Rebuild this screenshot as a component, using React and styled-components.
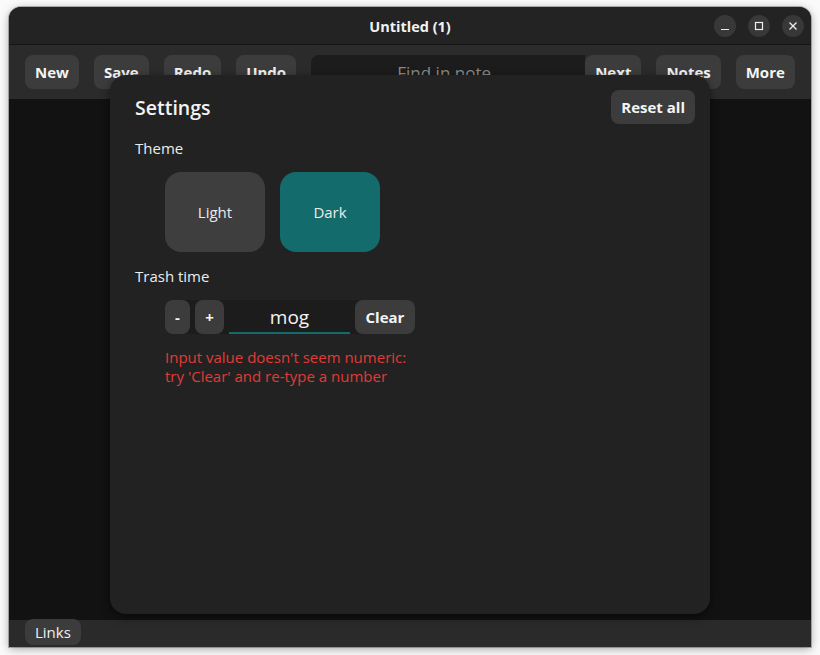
import React from "react";
import styled, { createGlobalStyle } from "styled-components";

const Global = createGlobalStyle`
  html, body { margin: 0; padding: 0; background: #fafafa; }
  body { font-family: "Open Sans", "Noto Sans", sans-serif; }
  * { box-sizing: border-box; }
`;

const Desktop = styled.div`
  width: 820px;
  height: 655px;
  padding: 7px 9px 8px 9px;
  background: #fafafa;
`;

const Window = styled.div`
  position: relative;
  width: 802px;
  height: 640px;
  display: flex;
  flex-direction: column;
  border-radius: 12px 12px 0 0;
  overflow: hidden;
  background: #121212;
  box-shadow: 0 2px 10px rgba(0, 0, 0, 0.35), 0 0 0 1px rgba(0, 0, 0, 0.25);
`;

const TitleBar = styled.div`
  height: 38px;
  flex: none;
  display: flex;
  align-items: center;
  justify-content: center;
  padding-top: 2px;
  background: #232323;
  border-bottom: 1px solid #151515;
  position: relative;
`;

const Title = styled.div`
  color: #f2f2f2;
  font-weight: 700;
  font-size: 14.5px;
`;

const Controls = styled.div`
  position: absolute;
  right: 7px;
  top: 8px;
  display: flex;
  gap: 12px;
`;

const CtrlBtn = styled.div`
  width: 22px;
  height: 22px;
  border-radius: 50%;
  background: #383838;
  display: flex;
  align-items: center;
  justify-content: center;
`;

const Toolbar = styled.div`
  height: 54px;
  flex: none;
  display: flex;
  align-items: center;
  gap: 15px;
  padding: 0 15px 0 16px;
  background: #2b2b2b;
`;

const Btn = styled.button`
  height: 34px;
  padding: 0 10px;
  border: none;
  border-radius: 8px;
  background: #3c3c3c;
  color: #f4f4f4;
  font-family: inherit;
  font-size: 15px;
  font-weight: 700;
  display: flex;
  align-items: center;
  justify-content: center;
  flex: none;
`;

const Search = styled.div`
  width: 274px;
  height: 34px;
  margin-right: -15px;
  padding-right: 8px;
  background: #1c1c1c;
  border-radius: 8px 0 0 8px;
  display: flex;
  align-items: center;
  justify-content: center;
  color: #8a8a8a;
  font-size: 17px;
  flex: none;
`;

const Content = styled.div`
  flex: 1;
  background: #121212;
`;

const BottomBar = styled.div`
  height: 27px;
  flex: none;
  background: #2a2a2a;
  display: flex;
  align-items: flex-start;
  padding-left: 16px;
`;

const LinksBtn = styled.div`
  height: 26px;
  margin-top: -1px;
  padding: 0 10px;
  border-radius: 8px;
  background: #3c3c3c;
  color: #f0f0f0;
  font-size: 15px;
  display: flex;
  align-items: center;
`;

const Modal = styled.div`
  position: absolute;
  left: 101px;
  top: 68px;
  width: 600px;
  height: 539px;
  background: #222222;
  border-radius: 16px;
  box-shadow: 0 3px 10px rgba(0, 0, 0, 0.5);
  padding: 15px 15px 0 25px;
  display: flex;
  flex-direction: column;
`;

const Header = styled.div`
  display: flex;
  align-items: center;
  justify-content: space-between;
  height: 34px;
`;

const Heading = styled.div`
  color: #f3f3f3;
  font-size: 19.5px;
  font-weight: 600;
`;

const Label = styled.div`
  color: #ececec;
  font-size: 15px;
  line-height: 20px;
  margin-top: ${(p) => p.$mt}px;
`;

const ThemeRow = styled.div`
  display: flex;
  gap: 15px;
  margin: 14px 0 0 30px;
`;

const ThemeBtn = styled.div`
  width: 100px;
  height: 80px;
  border-radius: 16px;
  background: ${(p) => (p.$active ? "#136b6b" : "#3e3e3e")};
  color: #ececec;
  font-size: 15px;
  display: flex;
  align-items: center;
  justify-content: center;
`;

const SpinRow = styled.div`
  display: flex;
  margin: 14px 0 0 30px;
  align-self: flex-start;
  background: #1c1c1c;
  border-radius: 8px;
  height: 34px;
`;

const SmallBtn = styled(Btn)`
  padding: 0;
  width: ${(p) => p.$w}px;
  margin-right: ${(p) => p.$mr ?? 0}px;
`;

const Entry = styled.div`
  width: 121px;
  margin-right: 5px;
  display: flex;
  align-items: center;
  justify-content: center;
  color: #f4f4f4;
  font-size: 19px;
  border-bottom: 2px solid #136b6b;
  padding-top: 2px;
`;

const ErrorText = styled.div`
  color: #e03b36;
  font-size: 15px;
  line-height: 19px;
  margin: 14px 0 0 30px;
`;

export default function App() {
  return (
    <>
      <Global />
      <Desktop>
        <Window>
          <TitleBar>
            <Title>Untitled (1)</Title>
            <Controls>
              <CtrlBtn>
                <svg width="10" height="10" viewBox="0 0 10 10">
                  <line x1="1" y1="8.5" x2="9" y2="8.5" stroke="#eee" strokeWidth="1.2" />
                </svg>
              </CtrlBtn>
              <CtrlBtn>
                <svg width="10" height="10" viewBox="0 0 10 10">
                  <rect x="1.5" y="1.5" width="7" height="7" fill="none" stroke="#eee" strokeWidth="1.2" />
                </svg>
              </CtrlBtn>
              <CtrlBtn>
                <svg width="10" height="10" viewBox="0 0 10 10">
                  <path d="M1.5 1.5 L8.5 8.5 M8.5 1.5 L1.5 8.5" stroke="#eee" strokeWidth="1.3" />
                </svg>
              </CtrlBtn>
            </Controls>
          </TitleBar>
          <Toolbar>
            <Btn>New</Btn>
            <Btn>Save</Btn>
            <Btn>Redo</Btn>
            <Btn>Undo</Btn>
            <Search>Find in note</Search>
            <Btn>Next</Btn>
            <Btn>Notes</Btn>
            <Btn>More</Btn>
          </Toolbar>
          <Content />
          <BottomBar>
            <LinksBtn>Links</LinksBtn>
          </BottomBar>
          <Modal>
            <Header>
              <Heading>Settings</Heading>
              <Btn>Reset all</Btn>
            </Header>
            <Label $mt={14}>Theme</Label>
            <ThemeRow>
              <ThemeBtn>Light</ThemeBtn>
              <ThemeBtn $active>Dark</ThemeBtn>
            </ThemeRow>
            <Label $mt={14}>Trash time</Label>
            <SpinRow>
              <SmallBtn $w={25} $mr={5}>-</SmallBtn>
              <SmallBtn $w={29} $mr={5}>+</SmallBtn>
              <Entry>mog</Entry>
              <SmallBtn $w={60}>Clear</SmallBtn>
            </SpinRow>
            <ErrorText>
              Input value doesn't seem numeric:
              <br />
              try 'Clear' and re-type a number
            </ErrorText>
          </Modal>
        </Window>
      </Desktop>
    </>
  );
}
